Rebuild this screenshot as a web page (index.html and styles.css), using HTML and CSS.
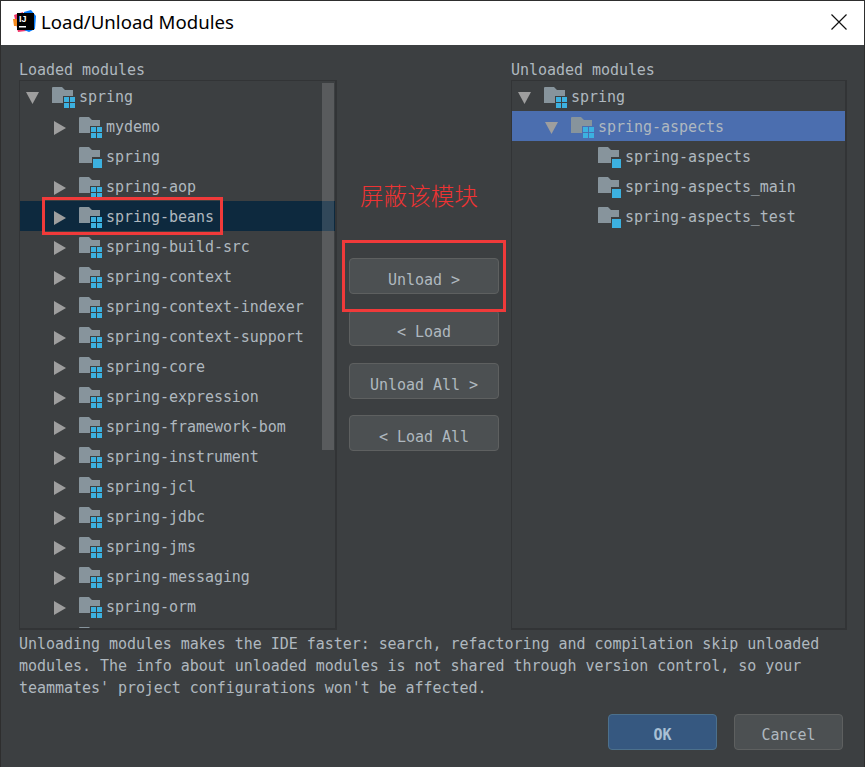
FILE: index.html
```html
<!DOCTYPE html>
<html>
<head lang="en">
    <meta charset="UTF-8">
    <title>Load/Unload Modules</title>
    <link rel="stylesheet" href="styles.css">
</head>
<body>
    <svg class="defs">
        <symbol id="ico-group" viewBox="0 0 23 21">
            <path fill="#87949c" d="M0 1q0-1 1-1h9l3 3h8v6H11v7H0z"/>
            <path fill="#3cb1e0" d="M12 10h5v5h-5zM18 10h5v5h-5zM12 16h5v5h-5zM18 16h5v5h-5z"/>
        </symbol>
        <symbol id="ico-module" viewBox="0 0 23 21">
            <path fill="#87949c" d="M0 1q0-1 1-1h9l3 3h8v7h-8v6H0z"/>
            <path fill="#3cb1e0" d="M14 12h9v9h-9z"/>
        </symbol>
    </svg>

    <div class="dialog">
        <div class="titlebar">
            <svg class="logo" viewBox="0 0 24 24">
                <path fill="#f0386b" d="M1 5l9-3 3 19-8 1z"/>
                <path fill="#f58a1f" d="M0 9h5v7H1z"/>
                <path fill="#087cfa" d="M11 2l7-2 5 6-1 13-6 3-5-2z"/>
                <rect x="4" y="3" width="17" height="17" fill="#000"/>
                <rect x="6" y="16" width="7" height="1.5" fill="#fff"/>
                <text x="6" y="12" class="logo-text">IJ</text>
            </svg>
            <span class="title">Load/Unload Modules</span>
            <svg class="close" viewBox="0 0 16 16"><path d="M.5.5l15 15M15.5.5l-15 15"/></svg>
        </div>

        <div class="columns">
            <div class="col">
                <div class="label">Loaded modules</div>
                <div class="panel">
                    <div class="tree">
                        <div class="row lv0"><i class="open"></i><svg class="ico"><use href="#ico-group"/></svg><span>spring</span></div>
                        <div class="row lv1"><i class="shut"></i><svg class="ico"><use href="#ico-group"/></svg><span>mydemo</span></div>
                        <div class="row lv1"><i></i><svg class="ico"><use href="#ico-module"/></svg><span>spring</span></div>
                        <div class="row lv1"><i class="shut"></i><svg class="ico"><use href="#ico-group"/></svg><span>spring-aop</span></div>
                        <div class="row lv1 dark"><i class="shut"></i><svg class="ico"><use href="#ico-group"/></svg><span>spring-beans</span></div>
                        <div class="row lv1"><i class="shut"></i><svg class="ico"><use href="#ico-group"/></svg><span>spring-build-src</span></div>
                        <div class="row lv1"><i class="shut"></i><svg class="ico"><use href="#ico-group"/></svg><span>spring-context</span></div>
                        <div class="row lv1"><i class="shut"></i><svg class="ico"><use href="#ico-group"/></svg><span>spring-context-indexer</span></div>
                        <div class="row lv1"><i class="shut"></i><svg class="ico"><use href="#ico-group"/></svg><span>spring-context-support</span></div>
                        <div class="row lv1"><i class="shut"></i><svg class="ico"><use href="#ico-group"/></svg><span>spring-core</span></div>
                        <div class="row lv1"><i class="shut"></i><svg class="ico"><use href="#ico-group"/></svg><span>spring-expression</span></div>
                        <div class="row lv1"><i class="shut"></i><svg class="ico"><use href="#ico-group"/></svg><span>spring-framework-bom</span></div>
                        <div class="row lv1"><i class="shut"></i><svg class="ico"><use href="#ico-group"/></svg><span>spring-instrument</span></div>
                        <div class="row lv1"><i class="shut"></i><svg class="ico"><use href="#ico-group"/></svg><span>spring-jcl</span></div>
                        <div class="row lv1"><i class="shut"></i><svg class="ico"><use href="#ico-group"/></svg><span>spring-jdbc</span></div>
                        <div class="row lv1"><i class="shut"></i><svg class="ico"><use href="#ico-group"/></svg><span>spring-jms</span></div>
                        <div class="row lv1"><i class="shut"></i><svg class="ico"><use href="#ico-group"/></svg><span>spring-messaging</span></div>
                        <div class="row lv1"><i class="shut"></i><svg class="ico"><use href="#ico-group"/></svg><span>spring-orm</span></div>
                        <div class="row lv1"><i class="shut"></i><svg class="ico"><use href="#ico-group"/></svg></div>
                    </div>
                    <div class="scrollbar"></div>
                </div>
            </div>

            <div class="col middle">
                <button class="btn">Unload &gt;</button>
                <button class="btn">&lt; Load</button>
                <button class="btn push">Unload All &gt;</button>
                <button class="btn">&lt; Load All</button>
            </div>

            <div class="col">
                <div class="label">Unloaded modules</div>
                <div class="panel">
                    <div class="tree">
                        <div class="row lv0"><i class="open"></i><svg class="ico"><use href="#ico-group"/></svg><span>spring</span></div>
                        <div class="row lv1 blue"><i class="open"></i><svg class="ico"><use href="#ico-group"/></svg><span>spring-aspects</span></div>
                        <div class="row lv2"><i></i><svg class="ico"><use href="#ico-module"/></svg><span>spring-aspects</span></div>
                        <div class="row lv2"><i></i><svg class="ico"><use href="#ico-module"/></svg><span>spring-aspects_main</span></div>
                        <div class="row lv2"><i></i><svg class="ico"><use href="#ico-module"/></svg><span>spring-aspects_test</span></div>
                    </div>
                </div>
            </div>
        </div>

        <p class="info">Unloading modules makes the IDE faster: search, refactoring and compilation skip unloaded<br>modules. The info about unloaded modules is not shared through version control, so your<br>teammates' project configurations won't be affected.</p>

        <div class="actions">
            <button class="btn ok">OK</button>
            <button class="btn">Cancel</button>
        </div>

        <!-- red marks drawn over the screenshot -->
        <div class="mark mark-row"></div>
        <div class="mark mark-btn"></div>
        <div class="note">屏蔽该模块</div>
    </div>
</body>
</html>
```

FILE: styles.css
```css
* {
    margin: 0;
    padding: 0;
    box-sizing: border-box;
}
html,body {
    height: 100%;
    overflow: hidden;
}
body {
    background: #3c3f41;
    color: #afb8bf;
    font: 15px/22px "DejaVu Sans Mono", monospace;
    letter-spacing: -0.04px;
}
.defs {
    position: absolute;
    width: 0;
    height: 0;
}
.dialog {
    position: relative;
    height: 767px;
    border: 1px solid #2e2e2e;
    border-bottom: 0;
}

.titlebar {
    display: flex;
    align-items: center;
    height: 44px;
    background: #fff;
    padding: 0 17px 2px 12px;
}
.logo {
    width: 24px;
    height: 24px;
}
.logo-text {
    font: bold 9px "Liberation Sans", sans-serif;
    fill: #fff;
}
.title {
    flex: 1;
    margin: 0 0 2px 4px;
    color: #000;
    font: 18.6px "Noto Sans", sans-serif;
    letter-spacing: 0;
}
.close {
    width: 16px;
    height: 16px;
    fill: none;
    stroke: #111;
    stroke-width: 1.2;
}

.columns {
    display: grid;
    grid-template-columns: 318px 174px 336px;
    padding: 15px 0 0 18px;
}
.label {
    height: 20px;
    line-height: 21px;
}
.panel {
    position: relative;
    height: 550px;
    overflow: hidden;
    border: 2px solid #323436;
    border-width: 1px 2px 2px 1px;
}
.row {
    display: flex;
    align-items: flex-start;
    height: 30px;
    line-height: 32px;
    white-space: nowrap;
}
.row i {
    display: block;
    flex: none;
    width: 26px;
    height: 30px;
}
.row .open {
    background: #9e9e9e;
    clip-path: polygon(0 11px, 13px 11px, 6.5px 23px);
}
.row .shut {
    background: #9e9e9e;
    clip-path: polygon(1px 10px, 13px 17px, 1px 24px);
}
.ico {
    flex: none;
    width: 23px;
    height: 21px;
    margin: 6px 4px 0 0;
}
.lv0 { padding-left: 6px; }
.lv1 { padding-left: 33px; }
.lv2 { padding-left: 60px; }
.dark { background: #0d293e; }
.blue { background: #4b6eaf; }

.scrollbar {
    position: absolute;
    top: 2px;
    right: 1px;
    width: 12px;
    height: 367px;
    background: rgba(255,255,255,.15);
}

.middle {
    display: flex;
    flex-direction: column;
    padding: 198px 0 0 12px;
}
.btn {
    width: 150px;
    height: 36px;
    margin-bottom: 16px;
    padding-top: 7px;
    background: #4c5052;
    border: 1px solid #5e6060;
    border-radius: 4px;
    color: #afb8bf;
    font: inherit;
    letter-spacing: inherit;
}
.push {
    margin-top: 1px;
}

.info {
    margin: 3px 0 0 18px;
}
.actions {
    display: flex;
    justify-content: flex-end;
    gap: 17px;
    margin-top: 15px;
    padding-right: 21px;
}
.actions .btn {
    width: 109px;
    padding-top: 5px;
}
.ok {
    background: #365880;
    border-color: #4c708c;
    color: #a9c0d4;
    font-weight: bold;
}

.mark {
    position: absolute;
    border: 3px solid #f03a3a;
}
.mark-row {
    left: 41px;
    top: 196px;
    width: 181px;
    height: 38px;
}
.mark-btn {
    left: 341px;
    top: 239px;
    width: 164px;
    height: 72px;
}
.note {
    position: absolute;
    left: 359px;
    top: 181px;
    color: #ee3333;
    font: 300 23.6px/30px "Liberation Serif", "Noto Sans CJK SC", serif;
    letter-spacing: 0;
}
```
